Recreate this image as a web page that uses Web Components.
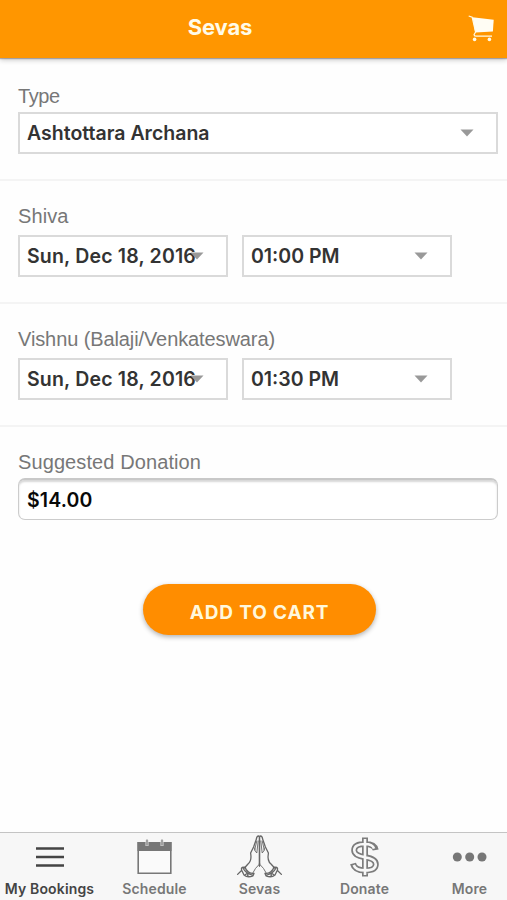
<!DOCTYPE html>
<html lang="en">
<head>
<meta charset="utf-8">
<title>Sevas</title>
<style>
html,body{margin:0;height:900px;overflow:hidden;background:#fefefe}
body{font-family:Inter,"Liberation Sans",sans-serif}
</style>
</head>
<body>
<seva-app></seva-app>
<script>
const define = (name, html) => {
  const t = document.createElement('template');
  t.innerHTML = html;
  customElements.define(name, class extends HTMLElement {
    constructor() {
      super();
      this.attachShadow({mode: 'open'}).appendChild(t.content.cloneNode(true));
    }
  });
};

define('app-header', `<style>
:host{display:flex;align-items:center;height:58px;box-sizing:border-box;background:#ff9600;color:#fffbe8;box-shadow:0 1px 1px rgba(90,80,90,.4),0 2px 5px rgba(0,0,0,.22);flex:none;position:relative}
h1{margin:0 0 4px;width:440px;text-align:center;font-size:22px;line-height:28px;font-weight:700;letter-spacing:-.15px}
svg{display:block;margin:0 0 2px 28px}
</style>
<h1><slot></slot></h1>
<svg width="28" height="28" viewBox="0 0 28 28" fill="none"><path d="M4.5 3.2 25.7 5.7 24.9 17.5 7.2 18.4Z" fill="#fffdf4"/><path d="M.7 2 4.2 3.3 7.6 18 6 20.6Q6 22.2 8 22.2H24" stroke="#fffbe8" stroke-width="1.2"/><circle cx="6.6" cy="25.4" r="1.8" fill="#fffbe8"/><circle cx="21.4" cy="25.4" r="1.8" fill="#fffbe8"/></svg>`);

define('form-section', `<style>
:host{display:block;box-sizing:border-box;height:123px;padding:23px 9px 0 18px;border-bottom:2px solid #f4f4f4}
:host([first]){padding-top:26px}
:host([last]){border-bottom:0;height:157px}
.label{font:20px/24px "Liberation Sans",sans-serif;color:#777;letter-spacing:.1px;height:31px;white-space:nowrap}
:host([first]) .label{height:28px}
:host([last]) .label{height:28px}
.row{display:flex;gap:14px}
</style>
<div class="label"><slot name="label"></slot></div><div class="row"><slot></slot></div>`);

define('select-box', `<style>
:host{display:flex;align-items:center;justify-content:space-between;box-sizing:border-box;width:210px;height:42px;border:2px solid #dadada;padding:0 22px 0 7px;color:#333;background:#fff;font-size:19.5px;font-weight:600;white-space:nowrap}
:host([wide]){width:480px}
.text{letter-spacing:var(--track,0)}
svg{flex:none;margin-left:-10px}
</style>
<span class="text"><slot></slot></span><svg width="14" height="8" viewBox="0 0 14 8"><path d="M.5.5h13L7 7.5Z" fill="#999"/></svg>`);

define('text-field', `<style>
:host{display:flex;align-items:center;box-sizing:border-box;width:480px;height:42px;border:1.5px solid #ccc;border-top:2px solid #c8c8c8;border-radius:7px;padding:0 8px;box-shadow:inset 0 2px 2px rgba(0,0,0,.16);background:#fff;color:#080808;font-size:19.5px;font-weight:600;letter-spacing:.15px}
</style><slot></slot>`);

define('action-button', `<style>
:host{display:flex;align-items:center;justify-content:center;box-sizing:border-box;width:233px;height:51px;padding-top:6px;border-radius:26px;background:#ff8d00;color:#fff8dc;font-size:19px;font-weight:700;letter-spacing:.85px;box-shadow:0 2px 5px rgba(0,0,0,.3)}
</style><slot></slot>`);

define('tab-item', `<style>
:host{display:flex;flex-direction:column;align-items:center;width:105px;flex:none;color:#777;font-size:14px;font-weight:600;white-space:nowrap}
:host([active]){color:#444}
.icon{height:47px;display:flex;align-items:flex-start}
.text{line-height:18px;letter-spacing:.15px}
</style><div class="icon"><slot name="icon"></slot></div><div class="text"><slot></slot></div>`);

define('tab-bar', `<style>
:host{display:flex;box-sizing:border-box;height:68px;border-top:1.5px solid #c4c4c4;background:#f7f7f7;margin-left:-3px;width:525px;flex:none}
</style><slot></slot>`);

define('seva-app', `<style>
:host{display:flex;flex-direction:column;width:507px;height:900px;overflow:hidden}
main{flex:1}
action-button{margin:0 0 0 143px}
svg{display:block}
.date{--track:.18px}
</style>
<app-header>Sevas</app-header>
<main>
<form-section first><span slot="label" style="letter-spacing:-.4px">Type</span><select-box wide>Ashtottara Archana</select-box></form-section>
<form-section><span slot="label">Shiva</span><select-box class="date">Sun, Dec 18, 2016</select-box><select-box>01:00 PM</select-box></form-section>
<form-section><span slot="label" style="letter-spacing:-.1px">Vishnu (Balaji/Venkateswara)</span><select-box class="date">Sun, Dec 18, 2016</select-box><select-box>01:30 PM</select-box></form-section>
<form-section last><span slot="label">Suggested Donation</span><text-field>$14.00</text-field></form-section>
<action-button>ADD TO CART</action-button>
</main>
<tab-bar>
<tab-item active><svg slot="icon" width="48" height="46" viewBox="0 0 48 46"><path d="M10 15.5h28M10 24h28M10 32.5h28" stroke="#444" stroke-width="2.6"/></svg>My Bookings</tab-item>
<tab-item><svg slot="icon" width="48" height="46" viewBox="0 0 48 46"><path d="M7.2 9.8h32.6v30.4H7.2z" fill="#fafafa" stroke="#777" stroke-width="1.6"/><path d="M6.5 9h34v9h-34z" fill="#777"/><path d="M16 7v6M31 7v6" stroke="#ddd" stroke-width="3"/><path d="M16 6.5v6M31 6.5v6" stroke="#888" stroke-width="1.4"/></svg>Schedule</tab-item>
<tab-item><svg slot="icon" width="48" height="46" viewBox="0 0 48 46" fill="none" stroke="#666" stroke-width="1.3" stroke-linecap="round" stroke-linejoin="round">
<g><path d="M23.5 33V7Q23.5 3 22.5 3Q20.8 3 20.4 6L17.6 14 14.6 20Q16 28 12 31L8.4 35"/><path d="M23.5 31Q19 35 16.5 40.5M20.8 8 18.6 17M22.2 8 20.8 20Q18.6 18.5 18.6 15" stroke-width=".9"/><path d="M8.4 34.4Q4.6 33.6 5.6 37L8 42Q11.6 45 17 42.8L18 40.4Q15 40.8 12.6 39Q9.4 37.2 9.2 33.8M5.8 37.2 1.6 41.4M7 35Q10 41 16.7 42.2M9 42 11.5 40M12 43Q11 40.5 13.4 39.6"/></g>
<g transform="matrix(-1 0 0 1 47 0)"><path d="M23.5 33V7Q23.5 3 22.5 3Q20.8 3 20.4 6L17.6 14 14.6 20Q16 28 12 31L8.4 35"/><path d="M23.5 31Q19 35 16.5 40.5M20.8 8 18.6 17M22.2 8 20.8 20Q18.6 18.5 18.6 15" stroke-width=".9"/><path d="M8.4 34.4Q4.6 33.6 5.6 37L8 42Q11.6 45 17 42.8L18 40.4Q15 40.8 12.6 39Q9.4 37.2 9.2 33.8M5.8 37.2 1.6 41.4M7 35Q10 41 16.7 42.2M9 42 11.5 40M12 43Q11 40.5 13.4 39.6"/></g></svg>Sevas</tab-item>
<tab-item><svg slot="icon" width="48" height="46" viewBox="0 0 48 46" fill="none"><path d="M24 4.5v39M34.7 17Q33.5 11 24 11Q13.2 11 13.2 17.3Q13.2 22.6 24 24.2Q34.8 25.8 34.8 31.2Q34.8 37.4 24 37.4Q13.6 37.4 12 30.5" stroke="#7c7c7c" stroke-width="6"/><path d="M24 6v36M33 15.6Q31.8 11 24 11Q13.2 11 13.2 17.3Q13.2 22.6 24 24.2Q34.8 25.8 34.8 31.2Q34.8 37.4 24 37.4Q14.6 37.4 12.7 32" stroke="#f7f7f7" stroke-width="2.6"/></svg>Donate</tab-item>
<tab-item><svg slot="icon" width="48" height="46" viewBox="0 0 48 46" fill="#777"><circle cx="11.3" cy="24" r="4.5"/><circle cx="23.7" cy="24" r="4.5"/><circle cx="36" cy="24" r="4.5"/></svg>More</tab-item>
</tab-bar>`);
</script>
</body>
</html>
